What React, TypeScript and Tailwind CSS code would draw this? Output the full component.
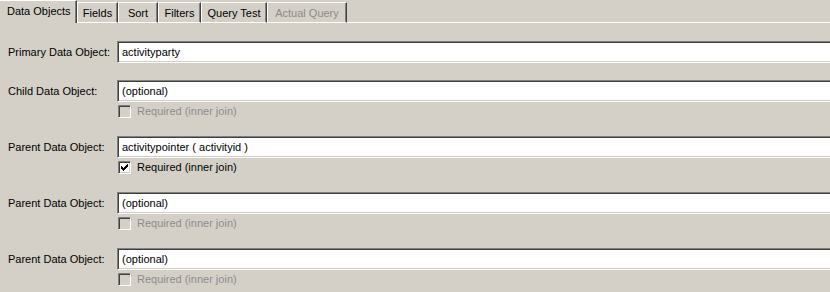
import React from "react";

const tabs = [
  { label: "Fields", w: "w-[41px]" },
  { label: "Sort", w: "w-[40px]" },
  { label: "Filters", w: "w-[43px]" },
  { label: "Query Test", w: "w-[66px]" },
  { label: "Actual Query", w: "w-[80px]", disabled: true },
];

const checkPixels: [number, number][] = [
  [6, 0],
  [5, 1], [6, 1],
  [0, 2], [4, 2], [5, 2], [6, 2],
  [0, 3], [1, 3], [3, 3], [4, 3], [5, 3],
  [0, 4], [1, 4], [2, 4], [3, 4], [4, 4],
  [1, 5], [2, 5], [3, 5],
  [2, 6],
];

function Checkbox({ checked, disabled }: { checked?: boolean; disabled?: boolean }) {
  return (
    <div
      className={`w-[13px] h-[13px] border-t border-l border-[#808080] border-b border-r border-b-white border-r-white shadow-[inset_1px_1px_0_#404040,inset_-1px_-1px_0_#d4d0c8] flex items-center justify-center ${
        disabled ? "bg-[#d4d0c8]" : "bg-white"
      }`}
    >
      {checked && (
        <svg width="7" height="7" viewBox="0 0 7 7" shapeRendering="crispEdges">
          {checkPixels.map(([x, y]) => (
            <rect key={`${x}-${y}`} x={x} y={y} width="1" height="1" fill="#000" />
          ))}
        </svg>
      )}
    </div>
  );
}

function Field({ value }: { value: string }) {
  return (
    <div className="flex-1 mr-[-4px] h-[22px] bg-white border-t border-l border-[#808080] border-b border-r border-b-white border-r-white shadow-[inset_1px_1px_0_#404040,inset_-1px_-1px_0_#d4d0c8] flex items-center pl-[4px] text-black whitespace-nowrap">
      {value}
    </div>
  );
}

function Row({
  label,
  value,
  check,
}: {
  label: string;
  value: string;
  check?: "on" | "off";
}) {
  return (
    <div className="flex flex-col">
      <div className="flex items-center">
        <div className="w-[117px] pl-[8px] text-black whitespace-nowrap">{label}</div>
        <Field value={value} />
      </div>
      {check && (
        <div className="flex items-center mt-[3px] pl-[118px] h-[13px]">
          <Checkbox checked={check === "on"} disabled={check === "off"} />
          <span className={`ml-[6px] ${check === "off" ? "text-[#8c8c8c]" : "text-black"}`}>
            Required (inner join)
          </span>
        </div>
      )}
    </div>
  );
}

export default function App() {
  return (
    <div className="w-[830px] h-[292px] bg-[#d4d0c8] overflow-hidden font-['Liberation_Sans',Arial,sans-serif] text-[11px] leading-none">
      <div className="flex items-end h-[23px]">
        <div className="w-[77px] h-[23px] border-t border-white border-r border-r-[#404040] shadow-[inset_-1px_0_0_#808080] flex items-start pt-[5px] pl-[7px] text-black">
          Data Objects
        </div>
        {tabs.map((t) => (
          <div
            key={t.label}
            className={`${t.w} h-[21px] border-t border-l border-white border-r border-r-[#404040] border-b border-b-white shadow-[inset_-1px_0_0_#808080] flex items-start justify-center pt-[5px] ${
              t.disabled ? "text-[#8c8c8c]" : "text-black"
            }`}
          >
            {t.label}
          </div>
        ))}
        <div className="flex-1 h-px bg-white" />
      </div>
      <div className="flex flex-col pt-[18px]">
        <Row label="Primary Data Object:" value="activityparty" />
        <div className="mt-[17px]">
          <Row label="Child Data Object:" value="(optional)" check="off" />
        </div>
        <div className="mt-[18px]">
          <Row label="Parent Data Object:" value="activitypointer ( activityid )" check="on" />
        </div>
        <div className="mt-[18px]">
          <Row label="Parent Data Object:" value="(optional)" check="off" />
        </div>
        <div className="mt-[18px]">
          <Row label="Parent Data Object:" value="(optional)" check="off" />
        </div>
      </div>
    </div>
  );
}
